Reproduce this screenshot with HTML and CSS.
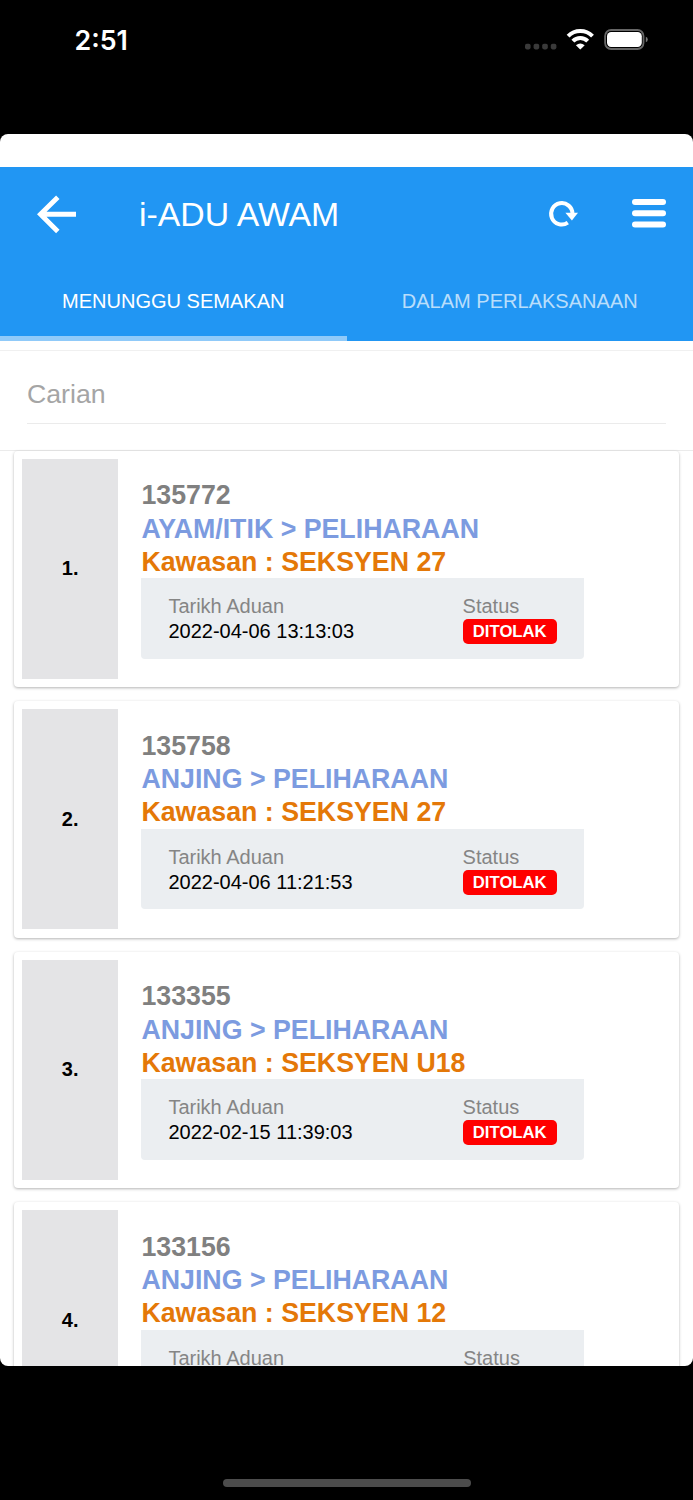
FILE: index.html
```
<!DOCTYPE html>
<html lang="ms">
<head>
<meta charset="utf-8">
<title>i-ADU AWAM</title>
<link rel="stylesheet" href="styles.css">
</head>
<body>
<div class="status-bar">
  <span class="time">2:51</span>
  <svg class="indicators" width="126" height="24" viewBox="0 0 126 24">
    <g fill="#3a3a3a"><rect x="1" y="15.8" width="5.6" height="5.6" rx="1.8"/><rect x="9.6" y="15.8" width="5.6" height="5.6" rx="1.8"/><rect x="18.2" y="15.8" width="5.6" height="5.6" rx="1.8"/><rect x="26.8" y="15.8" width="5.6" height="5.6" rx="1.8"/></g>
    <g fill="none" stroke="#fff" stroke-width="4"><path d="M44.1 8.1A17.2 17.2 0 0 1 68.5 8.1"/><path d="M48.9 13.2A10.3 10.3 0 0 1 63.7 13.2"/></g>
    <path d="M51.9 17.2Q56.3 13.7 60.7 17.2L56.9 21.1Q56.3 21.7 55.7 21.1Z" fill="#fff"/>
    <rect x="81.1" y="2" width="38.4" height="19" rx="6" fill="none" stroke="#666" stroke-width="1.8"/>
    <rect x="83" y="4" width="34.8" height="15" rx="4.2" fill="#fff"/>
    <path d="M121.8 8.7Q123.8 9.2 123.8 11.5T121.8 14.3Z" fill="#777"/>
  </svg>
</div>
<main class="screen">
  <header class="header">
    <div class="toolbar">
      <svg class="back" width="42" height="42" viewBox="0 0 42 42"><path d="M22.8 4.2L5.5 21.3L22.8 38.4M6 21.3H41" fill="none" stroke="#fff" stroke-width="4.9"/></svg>
      <h1 class="title">i-ADU AWAM</h1>
      <svg class="reload" width="32" height="28" viewBox="0 0 32 28"><path d="M20.8 22.7A10.7 10.7 0 1 1 25.5 14" fill="none" stroke="#fff" stroke-width="4"/><path d="M18.4 12.8H31L24.9 20.6Z" fill="#fff"/></svg>
      <svg class="menu" width="34" height="30" viewBox="0 0 34 30"><g fill="#fff"><rect y="1" width="34" height="6" rx="3"/><rect y="12.2" width="34" height="6" rx="3"/><rect y="23.4" width="34" height="6" rx="3"/></g></svg>
    </div>
    <nav class="tabs">
      <span class="tab active">MENUNGGU SEMAKAN</span>
      <span class="tab">DALAM PERLAKSANAAN</span>
    </nav>
  </header>
  <div class="search"><div class="field">Carian</div></div>
  <div class="list">
    <article class="card">
      <div class="number">1.</div>
      <div class="content">
        <div class="line id">135772</div><div class="line category">AYAM/ITIK &gt; PELIHARAAN</div><div class="line area">Kawasan : SEKSYEN 27</div>
        <div class="details"><div class="date"><div class="label">Tarikh Aduan</div><div class="value">2022-04-06 13:13:03</div></div><div><div class="label">Status</div><div class="badge">DITOLAK</div></div></div>
      </div>
    </article>
    <article class="card">
      <div class="number">2.</div>
      <div class="content">
        <div class="line id">135758</div><div class="line category">ANJING &gt; PELIHARAAN</div><div class="line area">Kawasan : SEKSYEN 27</div>
        <div class="details"><div class="date"><div class="label">Tarikh Aduan</div><div class="value">2022-04-06 11:21:53</div></div><div><div class="label">Status</div><div class="badge">DITOLAK</div></div></div>
      </div>
    </article>
    <article class="card">
      <div class="number">3.</div>
      <div class="content">
        <div class="line id">133355</div><div class="line category">ANJING &gt; PELIHARAAN</div><div class="line area">Kawasan : SEKSYEN U18</div>
        <div class="details"><div class="date"><div class="label">Tarikh Aduan</div><div class="value">2022-02-15 11:39:03</div></div><div><div class="label">Status</div><div class="badge">DITOLAK</div></div></div>
      </div>
    </article>
    <article class="card">
      <div class="number">4.</div>
      <div class="content">
        <div class="line id">133156</div><div class="line category">ANJING &gt; PELIHARAAN</div><div class="line area">Kawasan : SEKSYEN 12</div>
        <div class="details"><div class="date"><div class="label">Tarikh Aduan</div></div><div><div class="label">Status</div></div></div>
      </div>
    </article>
  </div>
</main>
<div class="home-area"><div class="home-indicator"></div></div>
</body>
</html>
```
FILE: styles.css
```
* { box-sizing: border-box; }
body {
  margin: 0;
  width: 693px;
  height: 1500px;
  overflow: hidden;
  background: #000;
  font-family: "Liberation Sans", Arial, sans-serif;
}
.status-bar {
  height: 134px;
  padding: 28px 43px 0 74.5px;
  display: flex;
  justify-content: space-between;
  align-items: flex-start;
}
.time {
  font: 600 26.8px/24px Inter, sans-serif;
  color: #fff;
}
.screen {
  height: 1232px;
  padding-top: 33.4px;
  overflow: hidden;
  background: #fff;
  border-radius: 8px;
}
.header {
  height: 174px;
  background: #2196f3;
  color: #fff;
}
.toolbar {
  height: 93.5px;
  padding: 0 27px 0 35px;
  display: flex;
  align-items: center;
}
.title {
  margin: 0 auto 0 62px;
  font-size: 33.8px;
  font-weight: 400;
  line-height: 40px;
}
.reload { margin: 0 53.5px 1px 0; }
.menu { margin-bottom: 3px; }
.tabs {
  display: flex;
  height: 80.5px;
}
.tab {
  flex: 1;
  display: flex;
  justify-content: center;
  padding-top: 28px;
  font-size: 20.05px;
  line-height: 24px;
  color: rgba(255, 255, 255, .7);
}
.tab.active {
  color: #fff;
  border-bottom: 5px solid #90caf9;
}
.search {
  height: 101px;
  margin-top: 8.6px;
  padding: 0 27px;
  border-top: 1px solid #f0f0f0;
  border-bottom: 1px solid #ebebeb;
}
.field {
  height: 73px;
  padding-top: 26px;
  border-bottom: 1px solid #ebebeb;
  font-size: 26.7px;
  line-height: 34px;
  color: #a5a5a5;
}
.list {
  display: flex;
  flex-direction: column;
  gap: 13.9px;
  padding: 0 14px;
}
.card {
  flex: none;
  height: 236.5px;
  display: flex;
  padding: 8px;
  background: #fff;
  border-radius: 4px;
  box-shadow: 0 1px 3px rgba(0, 0, 0, .3);
}
.number {
  width: 96.3px;
  height: 220px;
  display: flex;
  align-items: center;
  justify-content: center;
  background: #e4e4e6;
  font-size: 20px;
  font-weight: 700;
}
.content { padding: 19.5px 0 0 23.1px; }
.line {
  height: 33.3px;
  font-size: 26.75px;
  font-weight: 700;
  line-height: 35.4px;
  white-space: nowrap;
}
.id { color: #808080; }
.category { color: #7c9be0; }
.area { color: #e47808; }
.details {
  width: 442.5px;
  height: 80.5px;
  display: flex;
  padding: 16px 27px 0;
  background: #ebeef1;
  border-radius: 0 0 4px 4px;
  font-size: 20px;
  line-height: 25px;
}
.date { width: 294.8px; }
.label { color: #858585; }
.value { color: #000; }
.badge {
  width: 94.3px;
  height: 25px;
  background: #f00;
  border-radius: 5px;
  color: #fff;
  font-size: 16.7px;
  font-weight: 700;
  line-height: 25px;
  text-align: center;
}
.home-area {
  height: 134px;
  display: flex;
  justify-content: center;
  align-items: flex-end;
  padding-bottom: 13px;
}
.home-indicator {
  width: 248px;
  height: 8px;
  border-radius: 4px;
  background: #4c4c4c;
}
```
